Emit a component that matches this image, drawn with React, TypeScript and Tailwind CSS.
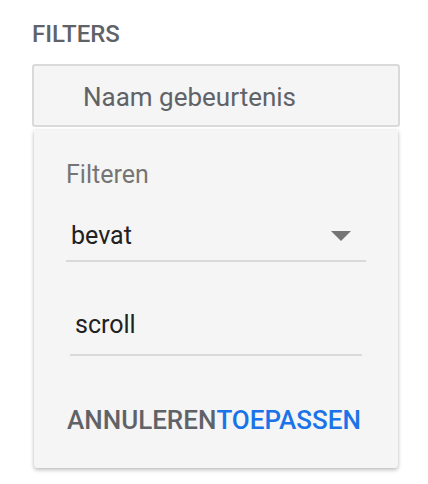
export default function App() {
  return (
    <main
      className="min-h-[484px] w-[428px] bg-white pl-8 pt-[20px]"
      style={{ fontFamily: "Roboto, 'Liberation Sans', sans-serif" }}
    >
      <h2 className="text-[24px] font-medium leading-[28px] text-[#5f6368]">FILTERS</h2>

      <div className="mt-[16px] w-[368px]">
        <div className="h-[63px] rounded-[3px] border-2 border-[#dadada] bg-[#f5f5f5] pl-[49px] pt-[16px]">
          <p className="text-[26px] leading-[30px] text-[#5f6368]">Naam gebeurtenis</p>
        </div>

        <div className="mx-[2px] mt-[3px] h-[338px] rounded-b-[3px] bg-[#f5f5f5] px-8 pt-[30px] shadow-[0_2px_4px_rgba(0,0,0,0.25),0_0_2px_rgba(0,0,0,0.08)]">
          <p className="text-[25px] leading-[30px] text-[#757575]">Filteren</p>

          <div className="mt-[31px] flex w-[300px] items-center justify-between border-b-2 border-[#d9d9d9] pb-[9px] pl-[5px] pr-[15px]">
            <span className="text-[25px] leading-[30px] text-[#212121]">bevat</span>
            <svg width="20" height="10" viewBox="0 0 20 10">
              <path d="M0 0h20L10 10z" fill="#757575" />
            </svg>
          </div>

          <div className="ml-[4px] mt-[48px] w-[292px] border-b-2 border-[#d9d9d9] pb-[14px] pl-[5px]">
            <span className="text-[25px] leading-[30px] text-[#212121]">scroll</span>
          </div>

          <div className="mt-[49px] flex pl-[1px] text-[26px] font-medium leading-[30px]">
            <button className="text-[#5f6368]">ANNULEREN</button>
            <button className="text-[#1a73e8]">TOEPASSEN</button>
          </div>
        </div>
      </div>
    </main>
  );
}
